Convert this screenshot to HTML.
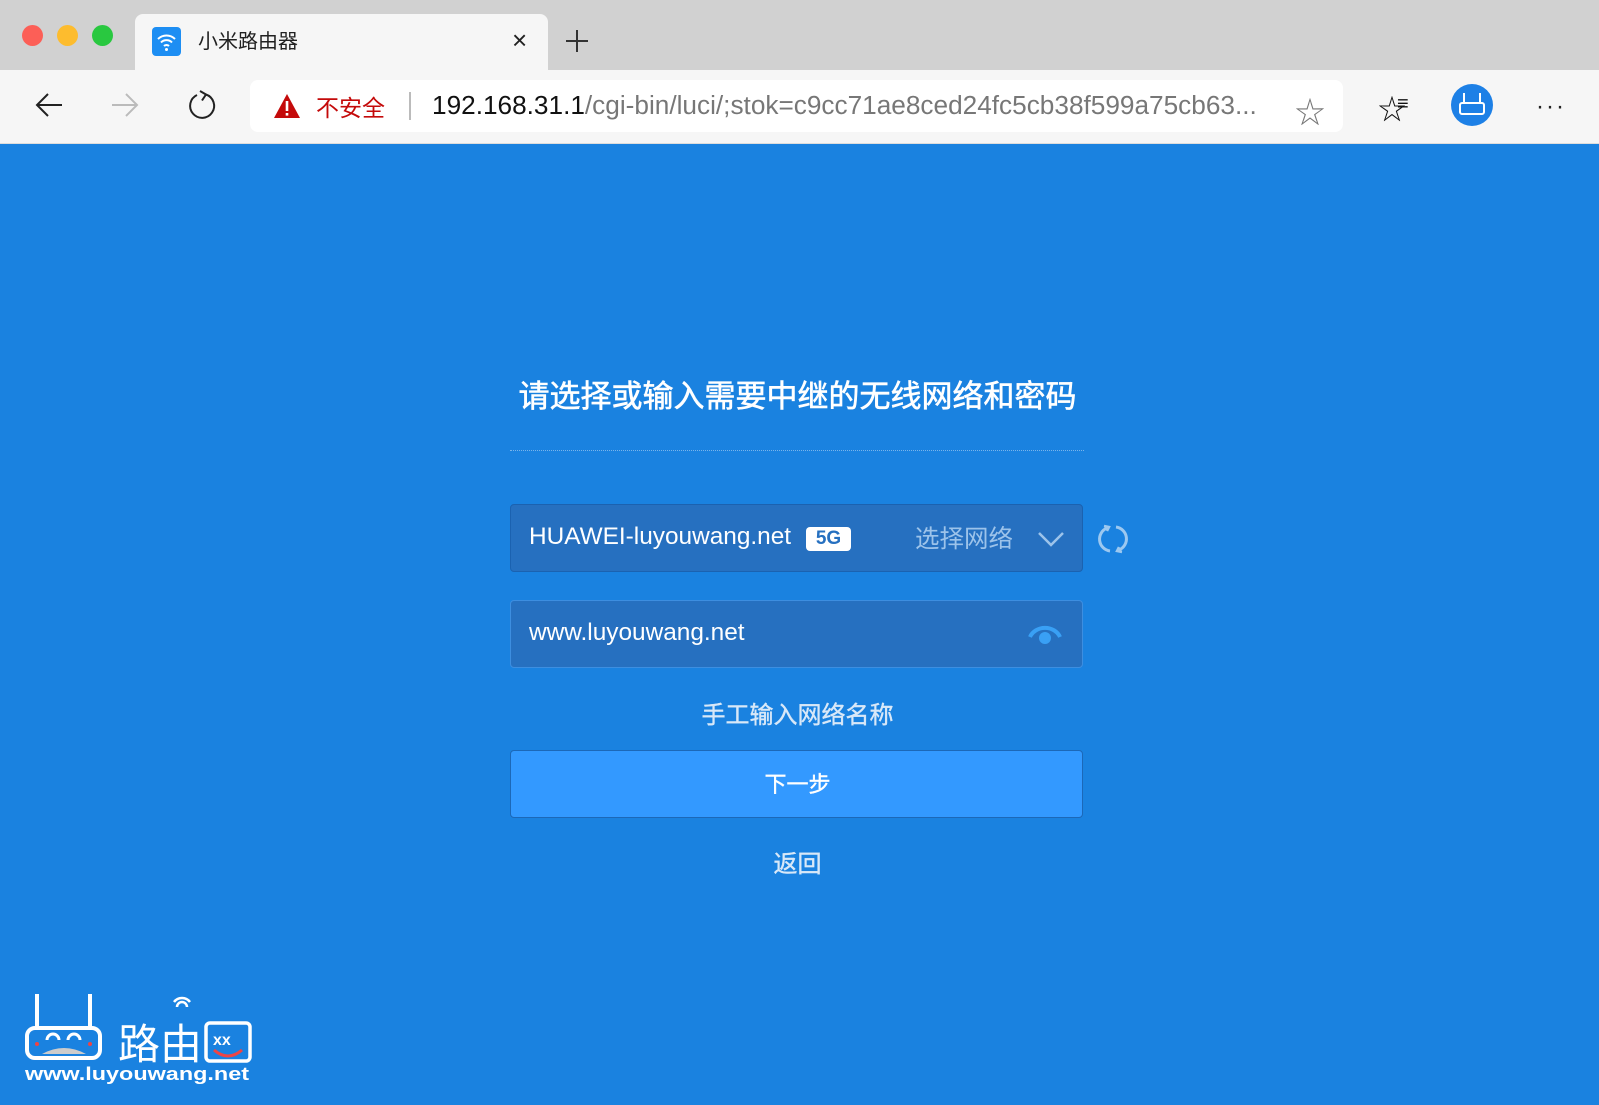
<!DOCTYPE html>
<html><head><meta charset="utf-8"><style>
*{margin:0;padding:0;box-sizing:border-box}
body{width:1599px;height:1105px;overflow:hidden;background:#1a82e0;font-family:"Liberation Sans","Noto Sans CJK SC",sans-serif;position:relative}
.abs{position:absolute}
#tabs{left:0;top:0;width:1599px;height:70px;background:#d1d1d1}
#tool{left:0;top:70px;width:1599px;height:74px;background:#f6f6f6;border-bottom:1px solid #ddd}
.dot{width:21px;height:21px;border-radius:50%;top:25px}
#tab{left:135px;top:14px;width:413px;height:57px;background:#f6f6f6;border-radius:8px 8px 0 0}
#url{left:250px;top:80px;width:1093px;height:52px;background:#fff;border-radius:8px}
.box{left:510px;width:573px;height:68px;border-radius:4px;background:#2670c0;border:1px solid #1b62b0}
.wt{color:#fff}
</style></head><body>
<div id="tabs" class="abs"></div>
<div class="abs dot" style="left:22px;background:#fc5f57"></div>
<div class="abs dot" style="left:57px;background:#fdbc2e"></div>
<div class="abs dot" style="left:92px;background:#29c840"></div>
<div id="tab" class="abs"></div>
<svg class="abs" style="left:152px;top:27px" width="29" height="29" viewBox="0 0 29 29"><rect width="29" height="29" rx="4" fill="#1d8ef3"/><path d="M6 12a12 12 0 0 1 17 0M9 15.5a7.5 7.5 0 0 1 11 0M12 19a3.5 3.5 0 0 1 5 0" stroke="#fff" stroke-width="2" fill="none"/><circle cx="14.5" cy="22.5" r="1.5" fill="#fff"/></svg>
<div class="abs" style="left:198px;top:25px;font-size:20px;color:#222">小米路由器</div>
<div class="abs" style="left:512px;top:25px;font-size:26px;color:#222">×</div>
<svg class="abs" style="left:565px;top:29px" width="24" height="24"><path d="M12 1v22M1 12h22" stroke="#333" stroke-width="2"/></svg>
<div id="tool" class="abs"></div>
<svg class="abs" style="left:34px;top:92px" width="30" height="26"><path d="M28 13H3M14 2L3 13l11 11" stroke="#222" stroke-width="2" fill="none"/></svg>
<svg class="abs" style="left:110px;top:92px" width="30" height="26"><path d="M2 13h25M16 2l11 11-11 11" stroke="#bbb" stroke-width="2" fill="none"/></svg>
<svg class="abs" style="left:186px;top:89px" width="32" height="32"><path d="M11 6A12 12 0 1 0 20 5.5M20 5.5L14 2M20 5.5l-4 6" stroke="#222" stroke-width="2" fill="none"/></svg>
<div id="url" class="abs"></div>
<svg class="abs" style="left:273px;top:93px" width="28" height="26"><path d="M14 1L27 25H1z" fill="#c40a0a"/><rect x="12.7" y="8" width="2.6" height="10" fill="#fff"/><rect x="12.7" y="20" width="2.6" height="2.6" fill="#fff"/></svg>
<div class="abs" style="left:316px;top:89px;font-size:23px;color:#c40a0a">不安全</div>
<div class="abs" style="left:409px;top:92px;width:2px;height:28px;background:#bbb"></div>
<div class="abs" style="left:432px;top:90px;font-size:26.2px;color:#777;white-space:nowrap"><span style="color:#111">192.168.31.1</span>/cgi-bin/luci/;stok=c9cc71ae8ced24fc5cb38f599a75cb63...</div>
<div class="abs" style="left:1295px;top:88px;font-size:30px;color:#777">☆</div>
<div class="abs" style="left:1378px;top:88px;font-size:28px;color:#111">☆</div>
<div class="abs" style="left:1397px;top:93px;font-size:20px;color:#111;font-weight:bold">≡</div>
<svg class="abs" style="left:1451px;top:84px" width="42" height="42"><circle cx="21" cy="21" r="21" fill="#1d80e6"/><path d="M13 9v10M29 9v10" stroke="#fff" stroke-width="2"/><rect x="9" y="19" width="24" height="11" rx="2" fill="none" stroke="#fff" stroke-width="2"/></svg>
<div class="abs" style="left:1536px;top:93px;font-size:24px;color:#222;letter-spacing:2px">···</div>

<div class="abs wt" style="left:0;width:1595px;top:371px;text-align:center;font-size:31px;-webkit-text-stroke:0.6px #fff">请选择或输入需要中继的无线网络和密码</div>
<div class="abs" style="left:510px;top:450px;width:574px;border-top:1px dotted #7ab4ea"></div>
<div class="abs box" style="top:504px"></div>
<div class="abs wt" style="left:529px;top:523px;font-size:24.4px">HUAWEI-luyouwang.net</div>
<div class="abs" style="left:806px;top:527px;width:45px;height:24px;background:#fff;border-radius:4px;color:#2670c0;font-size:19px;text-align:center;line-height:24px;font-weight:bold">5G</div>
<div class="abs" style="left:915px;top:520px;font-size:24.5px;color:#9cc3ea">选择网络</div>
<svg class="abs" style="left:1037px;top:530px" width="28" height="18"><path d="M2 3l12 12 12-12" stroke="#9cc3ea" stroke-width="2.5" fill="none"/></svg>
<svg class="abs" style="left:1096px;top:522px" width="34" height="34"><path d="M11 6A12 12 0 0 0 14 29M23 28A12 12 0 0 0 20 5" stroke="#9cc8f0" stroke-width="3" fill="none"/><path d="M8 4l5 1-2 4M26 30l-5-1 2-4" stroke="#9cc8f0" stroke-width="2.5" fill="none"/></svg>
<div class="abs box" style="top:600px;border-color:#3d8ee0"></div>
<div class="abs wt" style="left:529px;top:619px;font-size:24.4px">www.luyouwang.net</div>
<svg class="abs" style="left:1027px;top:623px" width="36" height="24"><path d="M3 14a16 14 0 0 1 30 0" stroke="#39a0f5" stroke-width="4" fill="none"/><circle cx="18" cy="15" r="6" fill="#39a0f5"/></svg>
<div class="abs" style="left:0;width:1595px;top:695px;text-align:center;font-size:24px;color:#d8e8f8;-webkit-text-stroke:0.4px #d8e8f8">手工输入网络名称</div>
<div class="abs" style="left:510px;top:750px;width:573px;height:68px;border-radius:4px;background:#3399ff;border:1px solid #1c68b8"></div>
<div class="abs wt" style="left:0;width:1595px;top:767px;text-align:center;font-size:22px;-webkit-text-stroke:0.4px #fff">下一步</div>
<div class="abs" style="left:0;width:1595px;top:844px;text-align:center;font-size:24px;color:#d8e8f8;-webkit-text-stroke:0.4px #d8e8f8">返回</div>

<svg class="abs" style="left:22px;top:990px" width="245" height="95" viewBox="0 0 245 95">
<path d="M15 4v36M68 4v36" stroke="#fff" stroke-width="4"/>
<rect x="5" y="38" width="73" height="30" rx="8" fill="none" stroke="#fff" stroke-width="4"/>
<path d="M25 50a6 6 0 0 1 12 0M46 50a6 6 0 0 1 12 0" stroke="#fff" stroke-width="3" fill="none"/>
<path d="M20 64q22-12 44 0z" fill="#ccc"/>
<circle cx="15" cy="54" r="2" fill="#e44"/><circle cx="68" cy="54" r="2" fill="#e44"/>
<text x="96" y="69" font-size="42" fill="#fff" font-family="Noto Sans CJK SC,sans-serif" textLength="84" lengthAdjust="spacingAndGlyphs">路由</text>
<rect x="184" y="33" width="44" height="38" rx="4" fill="none" stroke="#fff" stroke-width="3.5"/>
<text x="191" y="55" font-size="16" font-weight="bold" fill="#fff">xx</text>
<path d="M192 60q14 12 28 0" stroke="#e44" stroke-width="3" fill="none"/>
<path d="M152 12a10 10 0 0 1 16 0M155 17a5 5 0 0 1 10 0" stroke="#fff" stroke-width="2.5" fill="none"/>
<text x="3" y="90" font-size="18" font-weight="bold" fill="#fff" font-family="Liberation Sans,sans-serif" textLength="224" lengthAdjust="spacingAndGlyphs">www.luyouwang.net</text>
</svg>
</body></html>
